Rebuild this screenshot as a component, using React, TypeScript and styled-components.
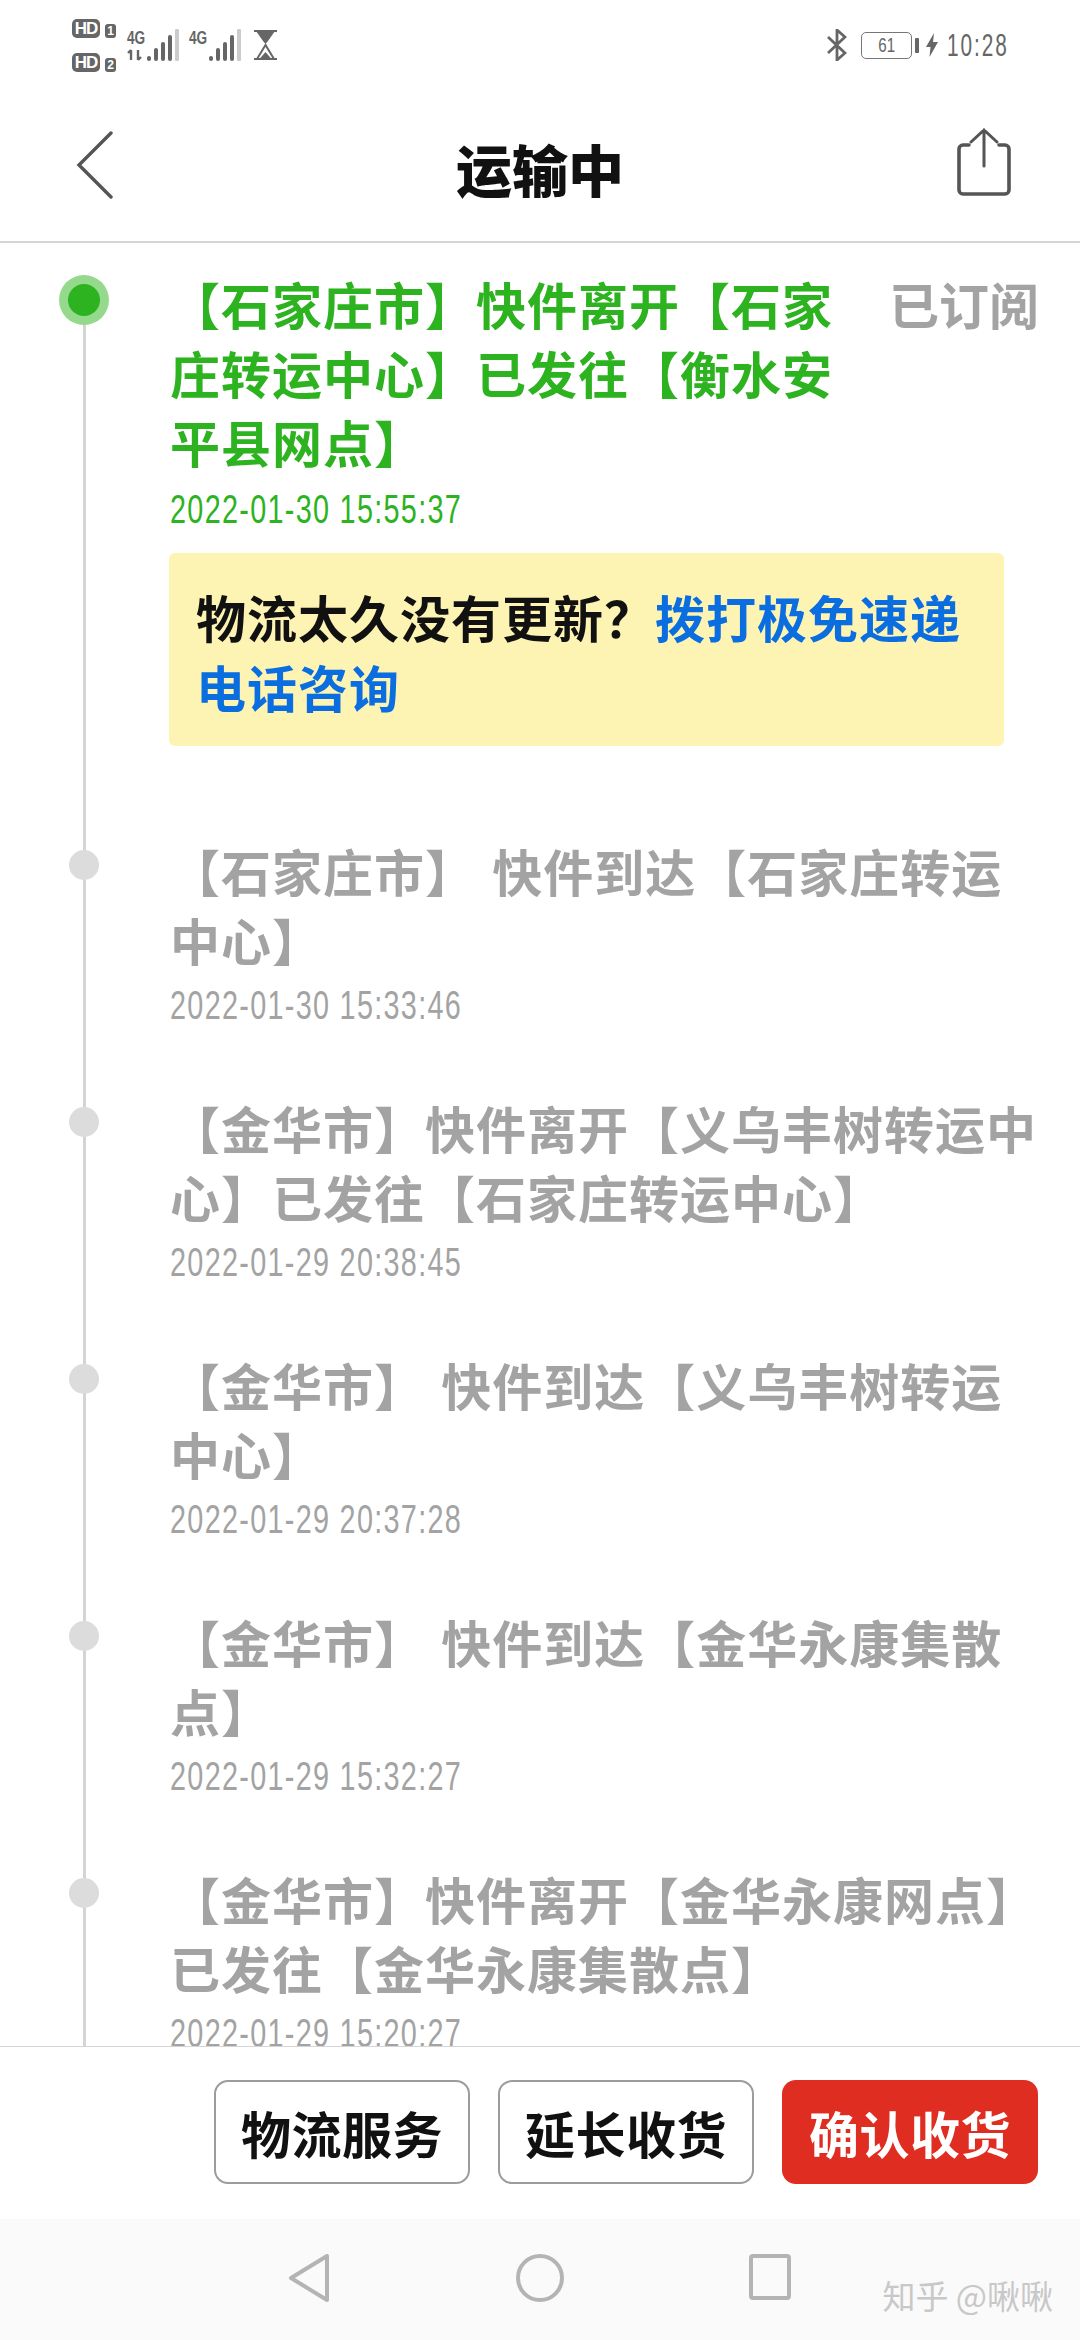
import styled, {createGlobalStyle} from 'styled-components'

const events = [
  {text: '【石家庄市】 快件到达【石家庄转运中心】', time: '2022-01-30 15:33:46'},
  {text: '【金华市】快件离开【义乌丰树转运中心】已发往【石家庄转运中心】', time: '2022-01-29 20:38:45'},
  {text: '【金华市】 快件到达【义乌丰树转运中心】', time: '2022-01-29 20:37:28'},
  {text: '【金华市】 快件到达【金华永康集散点】', time: '2022-01-29 15:32:27'},
  {text: '【金华市】快件离开【金华永康网点】已发往【金华永康集散点】', time: '2022-01-29 15:20:27'},
]

const Signal = ({arrows}: {arrows?: boolean}) => (
  <svg width="52" height="32" viewBox="0 0 52 32">
    {arrows && <path d="M4 31V21M1 24l3-3M11 21v10M11 31l3-3" stroke="#666" strokeWidth="2.4" fill="none"/>}
    <rect x="20" y="27" width="4" height="5" rx="2" fill="#666"/>
    <rect x="27" y="19" width="4" height="13" rx="2" fill="#666"/>
    <rect x="34" y="13" width="4" height="19" rx="2" fill="#666"/>
    <rect x="41" y="6" width="4" height="26" rx="2" fill="#666"/>
    <rect x="48" y="0" width="4" height="32" rx="1" fill="#ccc"/>
  </svg>
)

const App = () => {
  return (
    <Page>
      <Global/>
      <StatusBar>
        <StatusGroup>
          <SimColumn>
            <SimRow><HdBadge>HD</HdBadge><SimNumber>1</SimNumber></SimRow>
            <SimRow><HdBadge>HD</HdBadge><SimNumber>2</SimNumber></SimRow>
          </SimColumn>
          <SignalBlock>
            <NetLabel>4G</NetLabel>
            <Signal arrows/>
          </SignalBlock>
          <SignalBlock>
            <NetLabel>4G</NetLabel>
            <Signal/>
          </SignalBlock>
          <svg width="23" height="30" viewBox="0 0 23 30">
            <path d="M0 1h23M0 29h23" stroke="#666" strokeWidth="2"/>
            <path d="M2 1h19l-7 10-2.500 3-2.500-3z" fill="#666"/>
            <path d="M11.500 15L3 29h17z" fill="none" stroke="#666" strokeWidth="2"/>
            <path d="M11.500 22l-6 7h12z" fill="#666"/>
          </svg>
        </StatusGroup>
        <StatusGroup>
          <BluetoothIcon width="20" height="32" viewBox="0 0 20 32">
            <path d="M1 8l17 16-8 7V1l8 7L1 24" fill="none" stroke="#666" strokeWidth="2.800"/>
          </BluetoothIcon>
          <Battery><BatteryLabel>61</BatteryLabel></Battery>
          <BatteryCap/>
          <svg width="12" height="24" viewBox="0 0 12 24">
            <path d="M8 0L0 14h4.500l-1 10L12 9H7z" fill="#666"/>
          </svg>
          <Clock>10:28</Clock>
        </StatusGroup>
      </StatusBar>

      <NavBar>
        <BackIcon width="38" height="68" viewBox="0 0 38 68">
          <path d="M35 2L3 34l32 32" fill="none" stroke="#555" strokeWidth="3.400" strokeLinecap="round"/>
        </BackIcon>
        <Title>运输中</Title>
        <ShareIcon width="56" height="68" viewBox="0 0 56 68">
          <path d="M13 17H7a4 4 0 0 0-4 4v41a4 4 0 0 0 4 4h42a4 4 0 0 0 4-4V21a4 4 0 0 0-4-4h-6" fill="none" stroke="#555" strokeWidth="3.600" strokeLinecap="round"/>
          <path d="M28 2v36M15 14L28 2l13 12" fill="none" stroke="#555" strokeWidth="3" strokeLinecap="round"/>
        </ShareIcon>
      </NavBar>

      <Timeline>
        <Rail/>
        <ActiveEvent>
          <ActiveDot/>
          <ActiveBody>
            <EventText $active $narrow>【石家庄市】快件离开【石家庄转运中心】已发往【衡水安平县网点】</EventText>
            <EventTime $active>2022-01-30 15:55:37</EventTime>
          </ActiveBody>
          <Subscribed>已订阅</Subscribed>
        </ActiveEvent>
        <Notice>
          物流太久没有更新？<NoticeLink>拨打极免速递电话咨询</NoticeLink>
        </Notice>
        {events.map((item) => (
          <Event key={item.time}>
            <Dot/>
            <EventBody>
              <EventText>{item.text}</EventText>
              <EventTime>{item.time}</EventTime>
            </EventBody>
          </Event>
        ))}
      </Timeline>

      <ActionBar>
        <ActionButton>物流服务</ActionButton>
        <ActionButton>延长收货</ActionButton>
        <ActionButton $primary>确认收货</ActionButton>
      </ActionBar>

      <SystemNav>
        <svg width="44" height="48" viewBox="0 0 44 48">
          <path d="M40 2v44L4 24z" fill="none" stroke="#b4b4b4" strokeWidth="4" strokeLinejoin="round"/>
        </svg>
        <svg width="48" height="48" viewBox="0 0 48 48">
          <circle cx="24" cy="24" r="22" fill="none" stroke="#b4b4b4" strokeWidth="4"/>
        </svg>
        <svg width="42" height="46" viewBox="0 0 42 46">
          <rect x="2" y="2" width="38" height="42" rx="2" fill="none" stroke="#b4b4b4" strokeWidth="4"/>
        </svg>
        <Watermark>知乎 @啾啾</Watermark>
      </SystemNav>
    </Page>
  )
}

export default App

const Global = createGlobalStyle`
body{
  margin:0;
  background:#fff;
  font-family:"Noto Sans CJK SC","Noto Sans",sans-serif;
}
`

const Page = styled.div`
width:1080px;
height:2340px;
display:flex;
flex-direction:column;
overflow:hidden;
background:#fff;
`

const StatusBar = styled.div`
height:100px;
padding:18px 72px 0 72px;
box-sizing:border-box;
display:flex;
justify-content:space-between;
align-items:flex-start;
`

const StatusGroup = styled.div`
height:54px;
display:flex;
align-items:center;
`

const SimColumn = styled.div`
display:flex;
flex-direction:column;
gap:15px;
margin-right:11px;
`

const SimRow = styled.div`
display:flex;
align-items:flex-end;
gap:5px;
`

const HdBadge = styled.span`
width:28px;
height:19px;
border-radius:5px;
background:#666;
color:#fff;
font:700 17px/19px "Liberation Sans",sans-serif;
text-align:center;
letter-spacing:-1px;
`

const SimNumber = styled.span`
width:11px;
height:14px;
border-radius:3px;
background:#666;
color:#fff;
font:700 12px/14px "Liberation Sans",sans-serif;
text-align:center;
`

const SignalBlock = styled.div`
width:52px;
height:32px;
margin-right:10px;
position:relative;

&:nth-child(3){
  margin-right:13px;
}
`

const NetLabel = styled.span`
position:absolute;
left:0;
top:0;
color:#666;
font:700 19px/18px "Liberation Sans",sans-serif;
transform:scaleX(0.72);
transform-origin:left;
`

const BluetoothIcon = styled.svg`
margin-right:14px;
`

const Battery = styled.div`
width:51px;
height:27px;
box-sizing:border-box;
border:1.5px solid #777;
border-radius:5px;
display:flex;
justify-content:center;
align-items:center;
`

const BatteryLabel = styled.span`
color:#666;
font:400 21px/24px "Liberation Sans",sans-serif;
transform:scaleX(0.72);
`

const BatteryCap = styled.div`
width:4px;
height:15px;
margin:0 7px 0 3px;
border-radius:1px;
background:#666;
`

const Clock = styled.span`
width:61px;
margin-left:9px;
color:#666;
font:400 32px/32px "Liberation Sans",sans-serif;
letter-spacing:3px;
white-space:nowrap;
transform:scaleX(0.65);
transform-origin:left;
`

const NavBar = styled.div`
height:143px;
padding:0 68px;
box-sizing:border-box;
border-bottom:2px solid #d5d5d5;
display:grid;
grid-template-columns:1fr auto 1fr;
align-items:center;
`

const BackIcon = styled.svg`
margin:0 0 12px 8px;
`

const ShareIcon = styled.svg`
margin-bottom:18px;
justify-self:end;
`

const Title = styled.h1`
margin:0 0 6px;
color:#111;
font-size:56px;
font-weight:900;
line-height:60px;
`

const Timeline = styled.div`
flex:1;
min-height:0;
position:relative;
overflow:hidden;
`

const Rail = styled.div`
position:absolute;
left:83px;
top:50px;
bottom:0;
width:3px;
background:#d4d4d4;
`

const ActiveEvent = styled.div`
padding:30px 0 0 68px;
display:flex;
position:relative;
`

const Event = styled.div`
height:257px;
padding-left:69px;
box-sizing:border-box;
display:flex;
position:relative;
`

const ActiveDot = styled.div`
width:32px;
height:32px;
margin-top:11px;
border-radius:50%;
background:#2cb31f;
box-shadow:0 0 0 9px #95d98c;
flex:none;
position:relative;
z-index:1;
`

const Dot = styled.div`
width:30px;
height:30px;
margin-top:10px;
border-radius:50%;
background:#dcdcdc;
flex:none;
position:relative;
z-index:1;
`

const EventBody = styled.div`
margin-left:71px;
`

const ActiveBody = styled.div`
margin-left:70px;
`

const EventText = styled.div<{$active?: boolean; $narrow?: boolean}>`
width:${({$narrow}) => ($narrow ? '668px' : '874px')};
margin-top:-4px;
color:${({$active}) => ($active ? '#2cb31f' : '#a3a3a3')};
font-size:50px;
font-weight:700;
line-height:69px;
letter-spacing:1px;
word-spacing:4px;
`

const EventTime = styled.div<{$active?: boolean}>`
margin-top:${({$active}) => ($active ? '11px' : '9px')};
color:${({$active}) => ($active ? '#2cb31f' : '#a3a3a3')};
font:400 40px/44px "Liberation Sans",sans-serif;
letter-spacing:1.8px;
white-space:nowrap;
transform:scaleX(0.72);
transform-origin:left;
`

const Subscribed = styled.div`
position:absolute;
right:41px;
top:26px;
color:#a3a3a3;
font-size:50px;
font-weight:700;
line-height:69px;
`

const Notice = styled.div`
width:835px;
height:193px;
margin:22px 0 94px 169px;
padding:28px 20px 0 27px;
box-sizing:border-box;
border-radius:6px;
background:#fdf3b3;
color:#111;
font-size:50px;
font-weight:700;
line-height:70px;
letter-spacing:1px;
position:relative;
z-index:1;
`

const NoticeLink = styled.span`
color:#0a6de0;
`

const ActionBar = styled.div`
height:173px;
padding:33px 42px 0 0;
box-sizing:border-box;
border-top:1px solid #d5d5d5;
display:flex;
justify-content:flex-end;
gap:28px;
background:#fff;
`

const ActionButton = styled.button<{$primary?: boolean}>`
width:256px;
height:104px;
padding:0;
border:${({$primary}) => ($primary ? 'none' : '2px solid #9c9c9c')};
border-radius:14px;
background:${({$primary}) => ($primary ? '#e02d22' : '#fff')};
color:${({$primary}) => ($primary ? '#fff' : '#111')};
font-family:"Noto Sans CJK SC",sans-serif;
font-size:50px;
font-weight:700;
letter-spacing:0.5px;
`

const SystemNav = styled.div`
height:121px;
padding:35px 0 0 287px;
box-sizing:border-box;
display:flex;
gap:185px;
align-items:flex-start;
background:#fafafa;
position:relative;
`

const Watermark = styled.span`
position:absolute;
right:27px;
top:56px;
color:#c8c8c8;
font-size:33px;
font-weight:400;
line-height:40px;
white-space:nowrap;
`
